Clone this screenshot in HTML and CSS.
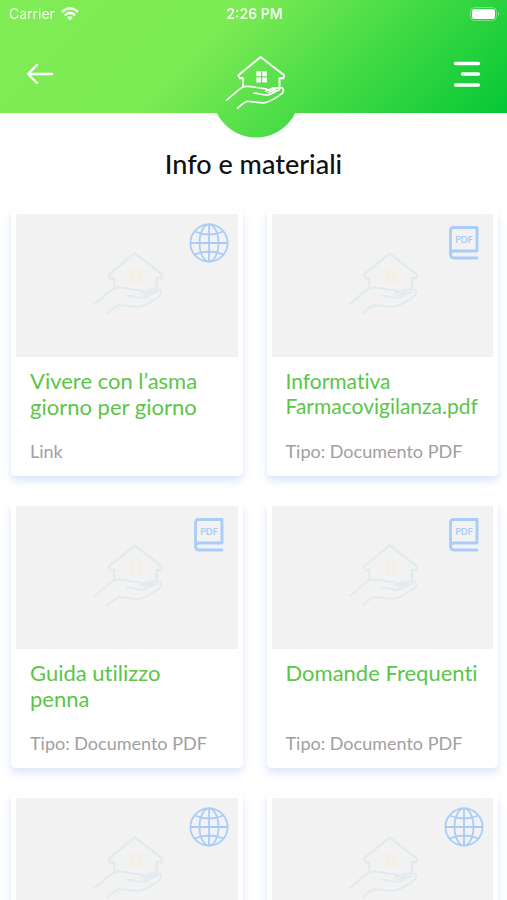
FILE: index.html
```html
<!DOCTYPE html>
<html lang="it">
<head>
<meta charset="utf-8">
<meta name="viewport" content="width=device-width, initial-scale=1">
<title>Info e materiali</title>
<link rel="stylesheet" href="styles.css">
</head>
<body>
<svg class="defs" aria-hidden="true">
  <symbol id="house" viewBox="52 48 186 178">
    <path class="line" d="M112 139V118H102L98 109L165 54L236 109L234 118H222V142"/>
    <path class="line thin" d="M62 184C82 170 98 150 114 144C132 138 152 149 182 150"/>
    <path class="line thin" d="M145 163C160 163 172 171 190 168C204 164 212 154 222 153M180 158L200 148L229 147C236 150 234 157 231 163C218 173 196 187 178 192C160 194 142 187 125 188C112 191 104 202 95 209M182 152L206 155M188 162L212 150"/>
    <path class="window" d="M152 97h14v15h-14zM170 97h14v15h-14zM152 116h14v15h-14zM170 116h14v15h-14z"/>
  </symbol>
  <symbol id="globe" viewBox="0 0 40 40">
    <g fill="none" stroke="currentColor" stroke-width="1.8">
      <circle cx="20" cy="20" r="18.6"/>
      <ellipse cx="20" cy="20" rx="9.5" ry="18.6"/>
      <path d="M20 1.4V38.6M1.4 20H38.6M5.5 8.5Q20 14.5 34.5 8.5M5.5 31.5Q20 25.5 34.5 31.5"/>
    </g>
  </symbol>
  <symbol id="book" viewBox="0 0 40 40">
    <path fill="none" stroke="currentColor" stroke-width="2.8" stroke-linecap="round" stroke-linejoin="round" d="M33 28V4.5H9.500Q6.500 4.500 6.500 8V31Q6.500 35 10 35H33M33 28H10Q6.500 28 6.500 31"/>
    <text x="20" y="20" text-anchor="middle" class="pdf">PDF</text>
  </symbol>
</svg>

<header class="header">
  <div class="status">
    <span class="carrier">Carrier
      <svg width="18" height="14" viewBox="0 0 18 14" aria-hidden="true"><g fill="none" stroke="#fff" stroke-width="2.5"><path d="M1 5Q9-2.500 17 5M3.800 8.300Q9 3.500 14.200 8.300"/></g><path fill="#fff" d="M6 10.500Q9 8 12 10.500L9 13.500z"/></svg>
    </span>
    <span class="time">2:26 PM</span>
    <span class="battery">
      <svg width="30" height="14" viewBox="0 0 30 14" aria-hidden="true"><rect x=".5" y=".5" width="26" height="13" rx="4" fill="none" stroke="#fff" stroke-opacity=".35"/><rect x="2" y="2" width="23" height="10" rx="2.500" fill="#fff"/><path fill="#fff" fill-opacity=".5" d="M28 5q2 2 0 4z"/></svg>
    </span>
  </div>
  <nav class="bar">
    <button class="icon-button" type="button" aria-label="Indietro">
      <svg width="28" height="22" viewBox="0 0 28 22"><path fill="none" stroke="#fff" stroke-width="2.400" stroke-linecap="round" stroke-linejoin="round" d="M26 11H2M11 2L2 11L11 20"/></svg>
    </button>
    <svg class="logo"><use href="#house"/></svg>
    <button class="icon-button" type="button" aria-label="Menu">
      <svg width="28" height="28" viewBox="0 0 28 28"><path fill="none" stroke="#fff" stroke-width="3.400" stroke-linecap="round" d="M2.500 3.500H25.500M9.500 14H25.500M2.500 25H25.500"/></svg>
    </button>
  </nav>
</header>

<main>
  <h1>Info e materiali</h1>
  <div class="grid">
    <a class="card" href="#">
      <div class="media"><svg class="house"><use href="#house"/></svg><svg class="kind"><use href="#globe"/></svg></div>
      <h2>Vivere con l’asma giorno per giorno</h2>
      <p>Link</p>
    </a>
    <a class="card" href="#">
      <div class="media"><svg class="house"><use href="#house"/></svg><svg class="kind"><use href="#book"/></svg></div>
      <h2 class="compact">Informativa Farmacovigilanza.pdf</h2>
      <p>Tipo: Documento PDF</p>
    </a>
    <a class="card" href="#">
      <div class="media"><svg class="house"><use href="#house"/></svg><svg class="kind"><use href="#book"/></svg></div>
      <h2>Guida utilizzo penna</h2>
      <p>Tipo: Documento PDF</p>
    </a>
    <a class="card" href="#">
      <div class="media"><svg class="house"><use href="#house"/></svg><svg class="kind"><use href="#book"/></svg></div>
      <h2>Domande Frequenti</h2>
      <p>Tipo: Documento PDF</p>
    </a>
    <a class="card" href="#">
      <div class="media"><svg class="house"><use href="#house"/></svg><svg class="kind"><use href="#globe"/></svg></div>
    </a>
    <a class="card" href="#">
      <div class="media"><svg class="house"><use href="#house"/></svg><svg class="kind"><use href="#globe"/></svg></div>
    </a>
  </div>
</main>
</body>
</html>
```
FILE: styles.css
```css
* { box-sizing: border-box; }

body {
  margin: 0;
  height: 100vh;
  overflow: hidden;
  background: #fff;
  font-family: Lato, "Liberation Sans", sans-serif;
  font-variant-ligatures: none;
}

.defs { display: none; }

.line {
  fill: none;
  stroke: currentColor;
  stroke-width: 6;
  stroke-linejoin: round;
  stroke-linecap: round;
}
.thin { stroke-width: 5; }
.window { fill: var(--window, currentColor); }
.pdf { font: 700 9px Lato, sans-serif; fill: currentColor; }

/* The bar is 113px tall; the mask adds the round tab under the logo. */
.header {
  height: 138px;
  color: #fff;
  background: linear-gradient(135deg, #80ec56 0%, #7deb54 38%, #04c835 96%);
  mask:
    linear-gradient(#000 0 0) top / 100% 113px no-repeat,
    radial-gradient(circle at 50.5% 94px, #000 43px, transparent 44px);
}

.status {
  display: grid;
  grid-template-columns: 1fr auto 1fr;
  align-items: center;
  height: 27px;
  padding: 0 7px 0 9px;
  font: 400 14px/20px Inter, sans-serif;
}
.carrier { display: flex; align-items: center; gap: 6px; opacity: .9; }
.time { font-weight: 600; opacity: .9; }
.battery { display: flex; justify-content: flex-end; }

.bar {
  display: flex;
  align-items: center;
  justify-content: space-between;
  height: 94px;
  padding: 0 20px;
}
.icon-button {
  display: grid;
  place-items: center;
  width: 40px;
  height: 40px;
  padding: 0;
  border: 0;
  background: none;
}
.icon-button svg { display: block; }
.logo { width: 62px; height: 59px; margin-top: 20px; }

h1 {
  margin: 8px 0 27px;
  text-align: center;
  font-size: 27px;
  line-height: 36px;
  font-weight: 500;
  color: #111;
}

.grid {
  display: grid;
  grid-template-columns: 1fr 1fr;
  gap: 25px 24px;
  padding: 0 9px 0 11px;
}
.card {
  min-height: 267px;
  padding: 5px 5px 14px;
  border-radius: 5px;
  background: #fff;
  box-shadow: 0 5px 8px rgba(120, 155, 235, .26);
  text-decoration: none;
}
.media {
  position: relative;
  display: grid;
  place-items: center;
  height: 143px;
  background: #f2f2f2;
}
.house { width: 72px; height: 69px; color: #e0ebef; --window: #f3f0e3; }
.kind {
  position: absolute;
  top: 9px;
  right: 9px;
  width: 40px;
  height: 40px;
  color: #a9cdf8;
}
h2 {
  min-height: 52px;
  margin: 11px 14px 20px;
  font-size: 22px;
  line-height: 26px;
  font-weight: 400;
  color: #5bc548;
}
.compact { font-size: 21px; line-height: 25px; }
.card p {
  margin: 0 14px;
  font-size: 18px;
  line-height: 22px;
  color: #a0a0a0;
}
```
